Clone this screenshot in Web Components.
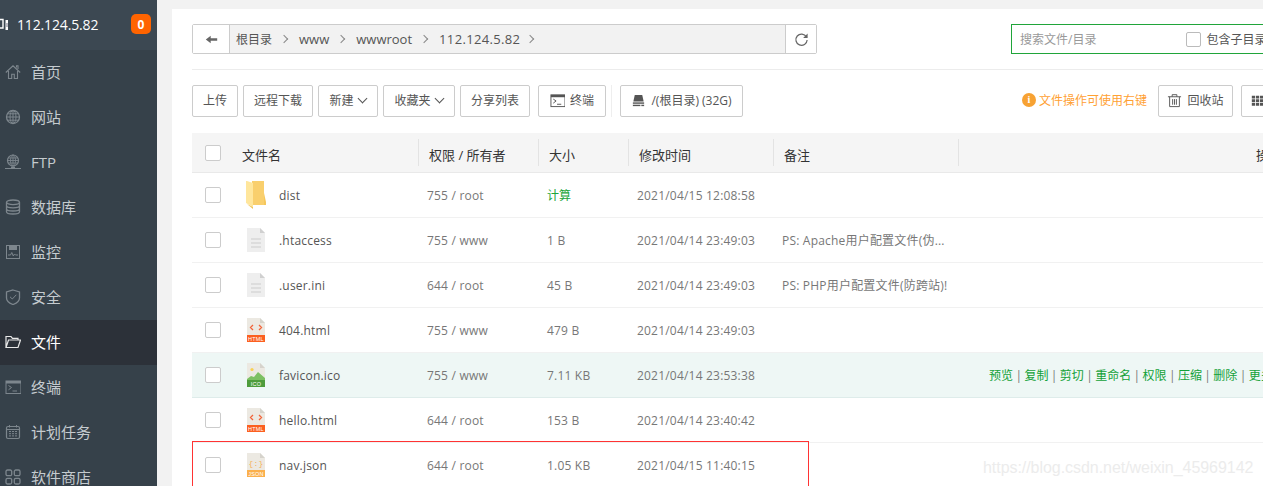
<!DOCTYPE html>
<html lang="zh"><head><meta charset="utf-8"><title>文件管理</title>
<style>
html,body{margin:0;padding:0;width:1263px;height:486px;overflow:hidden;background:#f2f2f2}
body{font:12px "Open Sans","Noto Sans CJK SC",sans-serif;color:#555}
</style></head><body>
<bt-app>
  <bt-sidebar slot="side" host-name="112.124.5.82" count="0">
    <bt-nav icon="home">首页</bt-nav>
    <bt-nav icon="globe">网站</bt-nav>
    <bt-nav icon="ftp">FTP</bt-nav>
    <bt-nav icon="db">数据库</bt-nav>
    <bt-nav icon="monitor">监控</bt-nav>
    <bt-nav icon="shield">安全</bt-nav>
    <bt-nav icon="folder" active>文件</bt-nav>
    <bt-nav icon="term">终端</bt-nav>
    <bt-nav icon="cal">计划任务</bt-nav>
    <bt-nav icon="apps">软件商店</bt-nav>
  </bt-sidebar>
  <bt-panel>
    <bt-topbar></bt-topbar>
    <bt-toolbar></bt-toolbar>
    <bt-table>
      <bt-row name="dist" kind="dir" perm="755 / root" size="计算" green time="2021/04/15 12:08:58"></bt-row>
      <bt-row name=".htaccess" kind="doc" perm="755 / www" size="1 B" time="2021/04/14 23:49:03" note="PS: Apache用户配置文件(伪..."></bt-row>
      <bt-row name=".user.ini" kind="doc" perm="644 / root" size="45 B" time="2021/04/14 23:49:03" note="PS: PHP用户配置文件(防跨站)!"></bt-row>
      <bt-row name="404.html" kind="html" perm="755 / www" size="479 B" time="2021/04/14 23:49:03"></bt-row>
      <bt-row name="favicon.ico" kind="ico" perm="755 / www" size="7.11 KB" time="2021/04/14 23:53:38" hover></bt-row>
      <bt-row name="hello.html" kind="html" perm="644 / root" size="153 B" time="2021/04/14 23:40:42"></bt-row>
      <bt-row name="nav.json" kind="json" perm="644 / root" size="1.05 KB" time="2021/04/15 11:40:15"></bt-row>
    </bt-table>
  </bt-panel>
  <bt-watermark>https://blog.csdn.net/weixin_45969142</bt-watermark>
</bt-app>
<script>
const ICONS={
 home:'<path d="M.8 8.500 8 1.800l7.200 6.700M3.500 7v7.500h3.200v-4.200h2.600v4.200h3.200V7M11.500 3.500V1.800h1.500V5" fill="none" stroke="currentColor" stroke-width="1.100"/>',
 globe:'<circle cx="8" cy="8" r="6.500" fill="none" stroke="currentColor" stroke-width="1.300"/><ellipse cx="8" cy="8" rx="3" ry="6.500" fill="none" stroke="currentColor" stroke-width="1"/><path d="M8 1.500v13M1.500 8h13M2.500 4.800h11M2.500 11.200h11" fill="none" stroke="currentColor" stroke-width="1"/>',
 ftp:'<circle cx="8" cy="6.500" r="5.500" fill="none" stroke="currentColor" stroke-width="1.200"/><ellipse cx="8" cy="6.500" rx="2.500" ry="5.500" fill="none" stroke="currentColor" stroke-width=".9"/><path d="M8 1v11M2.500 6.500h11M3 4h10M3 9h10" fill="none" stroke="currentColor" stroke-width=".9"/><path d="M0 14.500h16" stroke="currentColor"/><rect x="6" y="12.500" width="4" height="2.500" fill="currentColor"/>',
 db:'<g fill="none" stroke="currentColor" stroke-width="1.300"><ellipse cx="8" cy="3.300" rx="6.500" ry="2.300"/><path d="M1.500 3.300v9.400c0 1.300 2.900 2.300 6.500 2.300s6.500-1 6.500-2.300V3.300M1.500 6.500c0 1.300 2.900 2.300 6.500 2.300s6.500-1 6.500-2.300M1.500 9.700c0 1.300 2.900 2.300 6.500 2.300s6.500-1 6.500-2.300"/></g>',
 monitor:'<rect x="1.500" y="1.500" width="13" height="13" fill="none" stroke="currentColor"/><rect x="4" y="2" width="8" height="4" fill="currentColor"/><path d="M3 11h2.500l1.300-2.500 1.500 3.500 1.200-2 1 1H13" fill="none" stroke="currentColor"/>',
 shield:'<path d="M8 1 14.500 3v6c0 3-3 5.300-6.500 6.500C4.500 14.300 1.500 12 1.500 9V3z" fill="none" stroke="currentColor" stroke-width="1.300"/><path d="M5 7.800 7.300 10 11.300 5.800" fill="none" stroke="currentColor"/>',
 folder:'<path d="M1 13.500V2.500h5l1.500 1.800H13V6M1 13.500 3.500 6H15.500L13 13.500z" fill="none" stroke="currentColor" stroke-width="1.200"/>',
 term:'<rect x="1" y="2" width="15" height="12.500" fill="none" stroke="currentColor"/><rect x="1" y="2" width="15" height="2.500" fill="currentColor"/><path d="M3.500 6.500 6.500 8.500 3.500 10.800M7.500 12h4.500" fill="none" stroke="currentColor"/>',
 cal:'<rect x="1.500" y="2.500" width="13" height="12" rx="1.500" fill="none" stroke="currentColor" stroke-width="1.200"/><path d="M4.500 1v2.500M11.500 1v2.500M1.500 5.500h13" stroke="currentColor"/><path d="M4 7.500h8M4 9.700h8M4 11.900h8" stroke="currentColor" stroke-dasharray="2 1"/>',
 apps:'<g fill="none" stroke="currentColor" stroke-width="1.300"><rect x="1" y="1" width="5.700" height="5.700" rx="1.500"/><rect x="9.300" y="1" width="5.700" height="5.700" rx="1.500"/><rect x="1" y="9.300" width="5.700" height="5.700" rx="1.500"/><rect x="9.300" y="9.300" width="5.700" height="5.700" rx="1.500"/></g>',
 back:'<path d="M1 8 7 3.500V6.500H15V9.500H7V12.500z" fill="currentColor"/>',
 refresh:'<path d="M13.200 5.200A6 6 0 1 0 14 8.500" fill="none" stroke="currentColor" stroke-width="1.300"/><path d="M14.500 1.500V6.300H9.700z" fill="currentColor"/>',
 hdd:'<path d="M4 2h8l1.500 7h-11z" fill="currentColor"/><rect x="2" y="10" width="12" height="1.500" fill="currentColor"/><rect x="2" y="12.500" width="8" height="1.500" fill="currentColor"/><rect x="11" y="12.500" width="3" height="1.500" fill="currentColor"/>',
 trash:'<path d="M1 4h14M5.500 4V1.800h5V4M2.800 4v10.500h10.400V4M6 6.500v6M8 6.500v6M10 6.500v6" fill="none" stroke="currentColor"/>',
 grid:'<path d="M1 2h4v3.500H1zM6 2h4v3.500H6zM11 2h4v3.500h-4zM1 6.500h4V10H1zM6 6.500h4V10H6zM11 6.500h4V10h-4zM1 11h4v3.500H1zM6 11h4v3.500H6zM11 11h4v3.500h-4z" fill="currentColor"/>'
};
function def(tag,html){
  customElements.define(tag,class extends HTMLElement{
    constructor(){super();this.attachShadow({mode:'open'});}
    connectedCallback(){if(!this.shadowRoot.innerHTML)this.shadowRoot.innerHTML=typeof html==='function'?html(this):html;}
  });
}
def('bt-icon',h=>{const s=h.getAttribute('size')||16;return `<style>:host{display:inline-flex;width:${s}px;height:${s}px;flex:none}svg{display:block;width:100%;height:100%}</style><svg viewBox="0 0 16 16">${ICONS[h.getAttribute('name')]||''}</svg>`;});
def('bt-app',`<style>:host{display:flex;width:1263px;height:486px;overflow:hidden;position:relative}
.side{flex:0 0 157px;display:block}.main{flex:1 1 0;min-width:0;padding:9px 0 0 15px;overflow:hidden}</style>
<div class="side"><slot name="side"></slot></div><div class="main"><slot></slot></div>`);
def('bt-watermark',`<style>:host{position:absolute;left:983px;top:459px;font:16px "Liberation Sans",sans-serif;color:#ececec;letter-spacing:-.05px;white-space:nowrap}</style><slot></slot>`);
def('bt-sidebar',h=>`<style>:host{display:block;height:486px;background:#36414a;overflow:hidden}
.top{height:50px;background:#3c4852;display:flex;align-items:center;color:#fff;font-size:14px;padding-bottom:2px;box-sizing:border-box}
.logo{width:8px;height:16px;overflow:hidden;flex:none;margin-right:9px;position:relative;top:.5px}
.ip{flex:1;letter-spacing:-.15px}
.badge{width:20px;height:20px;border-radius:5px;background:#ff6400;color:#fff;font-size:12px;font-weight:700;display:flex;align-items:center;justify-content:center;margin-right:6px}
</style><div class="top"><div class="logo"><svg width="8" height="16" viewBox="0 0 8 16"><path d="M-3 2.500H3V11H-3" fill="none" stroke="#fff" stroke-width="1.400"/><rect x="5.500" y="3" width="3" height="10" fill="#fff"/><rect x="6.500" y="6" width="1" height="4" fill="#778"/></svg></div><span class="ip">${h.getAttribute('host-name')}</span><span class="badge">${h.getAttribute('count')}</span></div><slot></slot>`);
def('bt-nav',h=>`<style>:host{display:flex;align-items:center;height:45px;padding:0 0 2px 5px;font-size:15px;color:#c5cbcf;box-sizing:border-box}
:host([active]){background:#2c3139;color:#fff}
bt-icon{color:#7d868d;margin-right:10px}:host([active]) bt-icon{color:#e8e8e8}
</style><bt-icon name="${h.getAttribute('icon')}"></bt-icon><span><slot></slot></span>`);
def('bt-panel',`<style>:host{display:block;background:#fff;height:477px;padding:15px 0 0 20px;box-sizing:border-box;width:1200px}</style><slot></slot>`);
def('bt-topbar',`<style>:host{display:flex;height:45px;border-bottom:1px solid #ececec;box-sizing:content-box;width:1180px}
.crumb{display:flex;height:30px;width:625px;border:1px solid #ccc;box-sizing:border-box;border-radius:2px}
.b{display:flex;align-items:center;justify-content:center;color:#666;background:#fff}
.back{width:36px;border-right:1px solid #ccc}.back bt-icon{color:#666}
.path{flex:1;background:#f2f2f2;display:flex;align-items:center;padding-left:6px;font-size:13px;color:#555;white-space:nowrap}
.path span{margin-right:9px}.path i{width:5px;height:5px;border:solid #888;border-width:1px 1px 0 0;transform:rotate(45deg);margin-right:12px}
.path .cn{font-size:12px}.path .ip{letter-spacing:.35px;margin-right:7px}
.re{width:30px;border-left:1px solid #ccc}
.search{margin-left:194px;width:330px;height:30px;border:1px solid #20a53a;box-sizing:border-box;display:flex;align-items:center;padding-left:8px;color:#999;flex:none}
.ck{width:15px;height:15px;border:1px solid #bbb;border-radius:2px;box-sizing:border-box;margin-left:90px;margin-right:5px}
.inc{color:#555}
</style><div class="crumb"><div class="b back"><bt-icon name="back" size="13"></bt-icon></div>
<div class="path"><span class="cn">根目录</span><i></i><span>www</span><i></i><span>wwwroot</span><i></i><span class="ip">112.124.5.82</span><i></i></div>
<div class="b re"><bt-icon name="refresh" size="15"></bt-icon></div></div>
<div class="search"><span>搜索文件/目录</span><span class="ck"></span><span class="inc">包含子目录</span></div>`);
def('bt-btn',`<style>:host{display:inline-flex;align-items:center;justify-content:center;height:32px;box-sizing:border-box;border:1px solid #ccc;border-radius:2px;background:#fff;color:#555;font-size:12px;white-space:nowrap;flex:none;padding-bottom:2px}
::slotted(bt-icon){margin-right:5px;color:#555}
</style><slot></slot>`);
def('bt-toolbar',`<style>:host{display:flex;align-items:center;margin-top:15px;height:32px;width:1200px}
bt-btn{margin-right:5px}
.car{display:inline-block;width:6px;height:6px;border:solid #555;border-width:0 1px 1px 0;transform:rotate(45deg);margin:-4px 1px 0 5px}
.sep{width:1px;height:32px;background:#eee;margin:0 8px 0 0}
.tip{margin-left:274px;display:flex;align-items:center;color:#ffa133;width:136px;flex:none;justify-content:flex-end;padding:0 11px 2px 0;box-sizing:border-box}
.dot{width:14px;height:14px;border-radius:50%;background:#f7a233;color:#fff;font:700 10px/14px "Liberation Serif",serif;text-align:center;margin-right:3px}
</style>
<bt-btn style="width:46px">上传</bt-btn><bt-btn style="width:70px">远程下载</bt-btn>
<bt-btn style="width:60px">新建<span class="car"></span></bt-btn><bt-btn style="width:72px">收藏夹<span class="car"></span></bt-btn>
<bt-btn style="width:70px;margin-right:8px">分享列表</bt-btn>
<bt-btn style="width:68px"><bt-icon name="term" size="15"></bt-icon>终端</bt-btn>
<span class="sep"></span>
<bt-btn style="width:123px"><bt-icon name="hdd" size="15"></bt-icon>/(根目录) (32G)</bt-btn>
<div class="tip"><span class="dot">i</span>文件操作可使用右键</div>
<bt-btn style="width:75px;margin-right:8px"><bt-icon name="trash" size="15"></bt-icon>回收站</bt-btn>
<bt-btn style="width:60px;justify-content:flex-start;padding-left:9px"><bt-icon name="grid" size="13"></bt-icon></bt-btn>`);
const COLS='grid-template-columns:226px 120px 90px 145px 185px 300px';
def('bt-table',`<style>:host{display:block;margin-top:16px;width:1171px;position:relative}
.head{display:grid;${COLS};height:40px;box-sizing:border-box;background:#f5f5f5;border-bottom:1px solid #e9e9e9;color:#333;font-size:13px}
.c{display:flex;align-items:center;padding-left:11px;position:relative;white-space:nowrap;font-size:13px}
.c span.t{position:relative;top:2px}
.c+.c::before{content:"";position:absolute;left:0;top:6px;bottom:6px;width:1px;background:#e3e3e3}
.first{padding-left:13px}.ck{width:16px;height:16px;border:1px solid #ccc;border-radius:2px;box-sizing:border-box;background:#fff;margin-right:21px}
.ops{padding-left:298px}
.red{position:absolute;left:0;top:308px;width:617px;height:60px;border:1px solid #f33;box-sizing:border-box}
</style><div class="head"><div class="c first"><span class="ck"></span><span class="t">文件名</span></div><div class="c"><span class="t">权限 / 所有者</span></div><div class="c"><span class="t">大小</span></div><div class="c"><span class="t">修改时间</span></div><div class="c"><span class="t">备注</span></div><div class="c ops"><span class="t">操作</span></div></div>
<slot></slot><div class="red"></div>`);
const FILE={
 dir:`<svg width="20" height="30" viewBox="0 0 20 30"><path d="M6 1h12v24H6z" fill="#f9cf6d"/><path d="M18 13v12h2V22z" fill="#f5c75c"/><path d="M0 1h1l6 2v24L0 23z" fill="#ffe69c"/><path d="M7 27v2L1 24z" fill="#f1c458"/></svg>`,
 doc:`<svg width="20" height="26" viewBox="0 0 20 26"><path d="M1 1h13l5 5v19H1z" fill="#eee"/><path d="M14 1l5 5h-5z" fill="#d0d0d0"/><path d="M5 12h10M5 16h10M5 20h10" stroke="#d8d8d8" stroke-width="1.400"/></svg>`,
 html:`<svg width="20" height="26" viewBox="0 0 20 26"><path d="M1 1h13l5 5v19H1z" fill="#ece9e2"/><path d="M14 1l5 5h-5z" fill="#d6d3cc"/><path d="M7 8 4.500 10.500 7 13M13 8 15.500 10.500 13 13" fill="none" stroke="#f2643a" stroke-width="1.300"/><rect x="1" y="18" width="18" height="7" fill="#fb6020"/><text x="10" y="24" font-size="5.500" fill="#fff" text-anchor="middle" font-family="Liberation Sans">HTML</text></svg>`,
 ico:`<svg width="20" height="26" viewBox="0 0 20 26"><path d="M1 1h13l5 5v19H1z" fill="#ece9e2"/><path d="M14 1l5 5h-5z" fill="#d6d3cc"/><circle cx="6" cy="7.500" r="1.600" fill="#f9d154"/><path d="M1 17l4-3 3 1 4-5 7 6v3H1z" fill="#7cc063"/><rect x="1" y="18" width="18" height="7" fill="#4e9c3c"/><text x="10" y="24" font-size="5.500" fill="#fff" text-anchor="middle" font-family="Liberation Sans">ICO</text></svg>`,
 json:`<svg width="20" height="26" viewBox="0 0 20 26"><path d="M1 1h13l5 5v19H1z" fill="#ece9e2"/><path d="M14 1l5 5h-5z" fill="#d6d3cc"/><text x="10" y="14" font-size="8" fill="#f5b25c" text-anchor="middle" font-family="Liberation Mono">{:}</text><rect x="1" y="18" width="18" height="7" fill="#fbb04c"/><text x="10" y="24" font-size="5.500" fill="#fff" text-anchor="middle" font-family="Liberation Sans">JSON</text></svg>`
};
def('bt-row',h=>{const a=n=>h.getAttribute(n)||'';return `<style>:host{display:grid;${COLS};height:45px;box-sizing:border-box;border-bottom:1px solid #f1f1f1;color:#777;font-size:12px;background:#fff}
:host([hover]){background:#eef7f5;border-bottom-color:#deecea;}
.c{display:flex;align-items:center;padding-left:9px;white-space:nowrap;overflow:hidden;letter-spacing:.2px}
.first{padding-left:13px;overflow:visible}.ck{width:16px;height:16px;border:1px solid #ccc;border-radius:2px;box-sizing:border-box;background:#fff;flex:none;margin-right:25px}
.ic{width:20px;display:flex;justify-content:center;flex:none;margin-right:13px}.ic svg{display:block}
.name{color:#555;letter-spacing:.2px}.green{color:#20a53a;letter-spacing:0}
.ops{padding-left:31px;color:#12a138;overflow:visible;letter-spacing:0}.ops b{font-weight:400;color:#777;margin:0 2.4px}
</style><div class="c first"><span class="ck"></span><span class="ic">${FILE[a('kind')]}</span><span class="name">${a('name')}</span></div>
<div class="c">${a('perm')}</div><div class="c ${h.hasAttribute('green')?'green':''}">${a('size')}</div><div class="c">${a('time')}</div><div class="c">${a('note')}</div>
<div class="c ops">${h.hasAttribute('hover')?'预览<b>|</b>复制<b>|</b>剪切<b>|</b>重命名<b>|</b>权限<b>|</b>压缩<b>|</b>删除<b>|</b>更多':''}</div>`;});
</script>
</body></html>
